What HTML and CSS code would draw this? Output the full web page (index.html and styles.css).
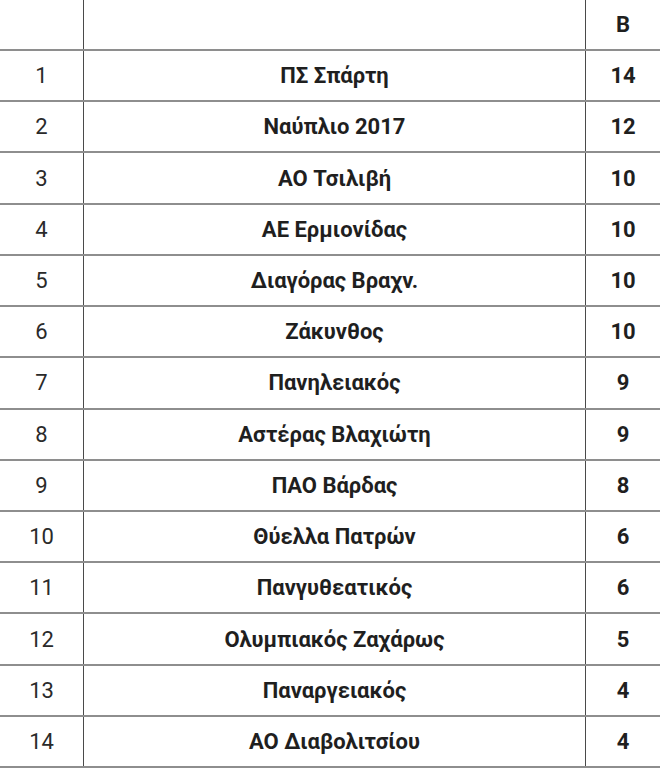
FILE: index.html
```html
<!DOCTYPE html>
<html lang="el">
<head>
<meta charset="utf-8">
<link rel="stylesheet" href="styles.css">
</head>
<body>
<table class="standings">
  <tr class="head"><td class="pos"></td><td class="team"></td><td class="pts">Β</td></tr>
  <tr><td class="pos">1</td><td class="team">ΠΣ Σπάρτη</td><td class="pts">14</td></tr>
  <tr><td class="pos">2</td><td class="team">Ναύπλιο 2017</td><td class="pts">12</td></tr>
  <tr><td class="pos">3</td><td class="team">ΑΟ Τσιλιβή</td><td class="pts">10</td></tr>
  <tr><td class="pos">4</td><td class="team">ΑΕ Ερμιονίδας</td><td class="pts">10</td></tr>
  <tr><td class="pos">5</td><td class="team">Διαγόρας Βραχν.</td><td class="pts">10</td></tr>
  <tr><td class="pos">6</td><td class="team">Ζάκυνθος</td><td class="pts">10</td></tr>
  <tr><td class="pos">7</td><td class="team">Πανηλειακός</td><td class="pts">9</td></tr>
  <tr><td class="pos">8</td><td class="team">Αστέρας Βλαχιώτη</td><td class="pts">9</td></tr>
  <tr><td class="pos">9</td><td class="team">ΠΑΟ Βάρδας</td><td class="pts">8</td></tr>
  <tr><td class="pos">10</td><td class="team">Θύελλα Πατρών</td><td class="pts">6</td></tr>
  <tr><td class="pos">11</td><td class="team">Πανγυθεατικός</td><td class="pts">6</td></tr>
  <tr><td class="pos">12</td><td class="team">Ολυμπιακός Ζαχάρως</td><td class="pts">5</td></tr>
  <tr><td class="pos">13</td><td class="team">Παναργειακός</td><td class="pts">4</td></tr>
  <tr><td class="pos">14</td><td class="team">ΑΟ Διαβολιτσίου</td><td class="pts">4</td></tr>
</table>
</body>
</html>
```
FILE: styles.css
```css
html, body {
  margin: 0;
  padding: 0;
  background: #fff;
}
body {
  font-family: Roboto, "Noto Sans", sans-serif;
  color: #222;
}
.standings {
  border-collapse: collapse;
  width: 660px;
  table-layout: fixed;
}
.standings td {
  border-bottom: 2px solid #8e8e8e;
  height: 49.23px;
  padding: 0;
  text-align: center;
  vertical-align: middle;
  font-size: 22px;
}
.standings .head td {
  height: 49px;
}
.standings .pos {
  width: 83px;
  border-right: 1px solid #4a4a4a;
  font-weight: 400;
  color: #2a2a2a;
}
.standings .team {
  width: 501px;
  border-right: 1px solid #4a4a4a;
  font-weight: 700;
  color: #1f1f1f;
}
.standings .pts {
  font-weight: 700;
  color: #1f1f1f;
}
```
